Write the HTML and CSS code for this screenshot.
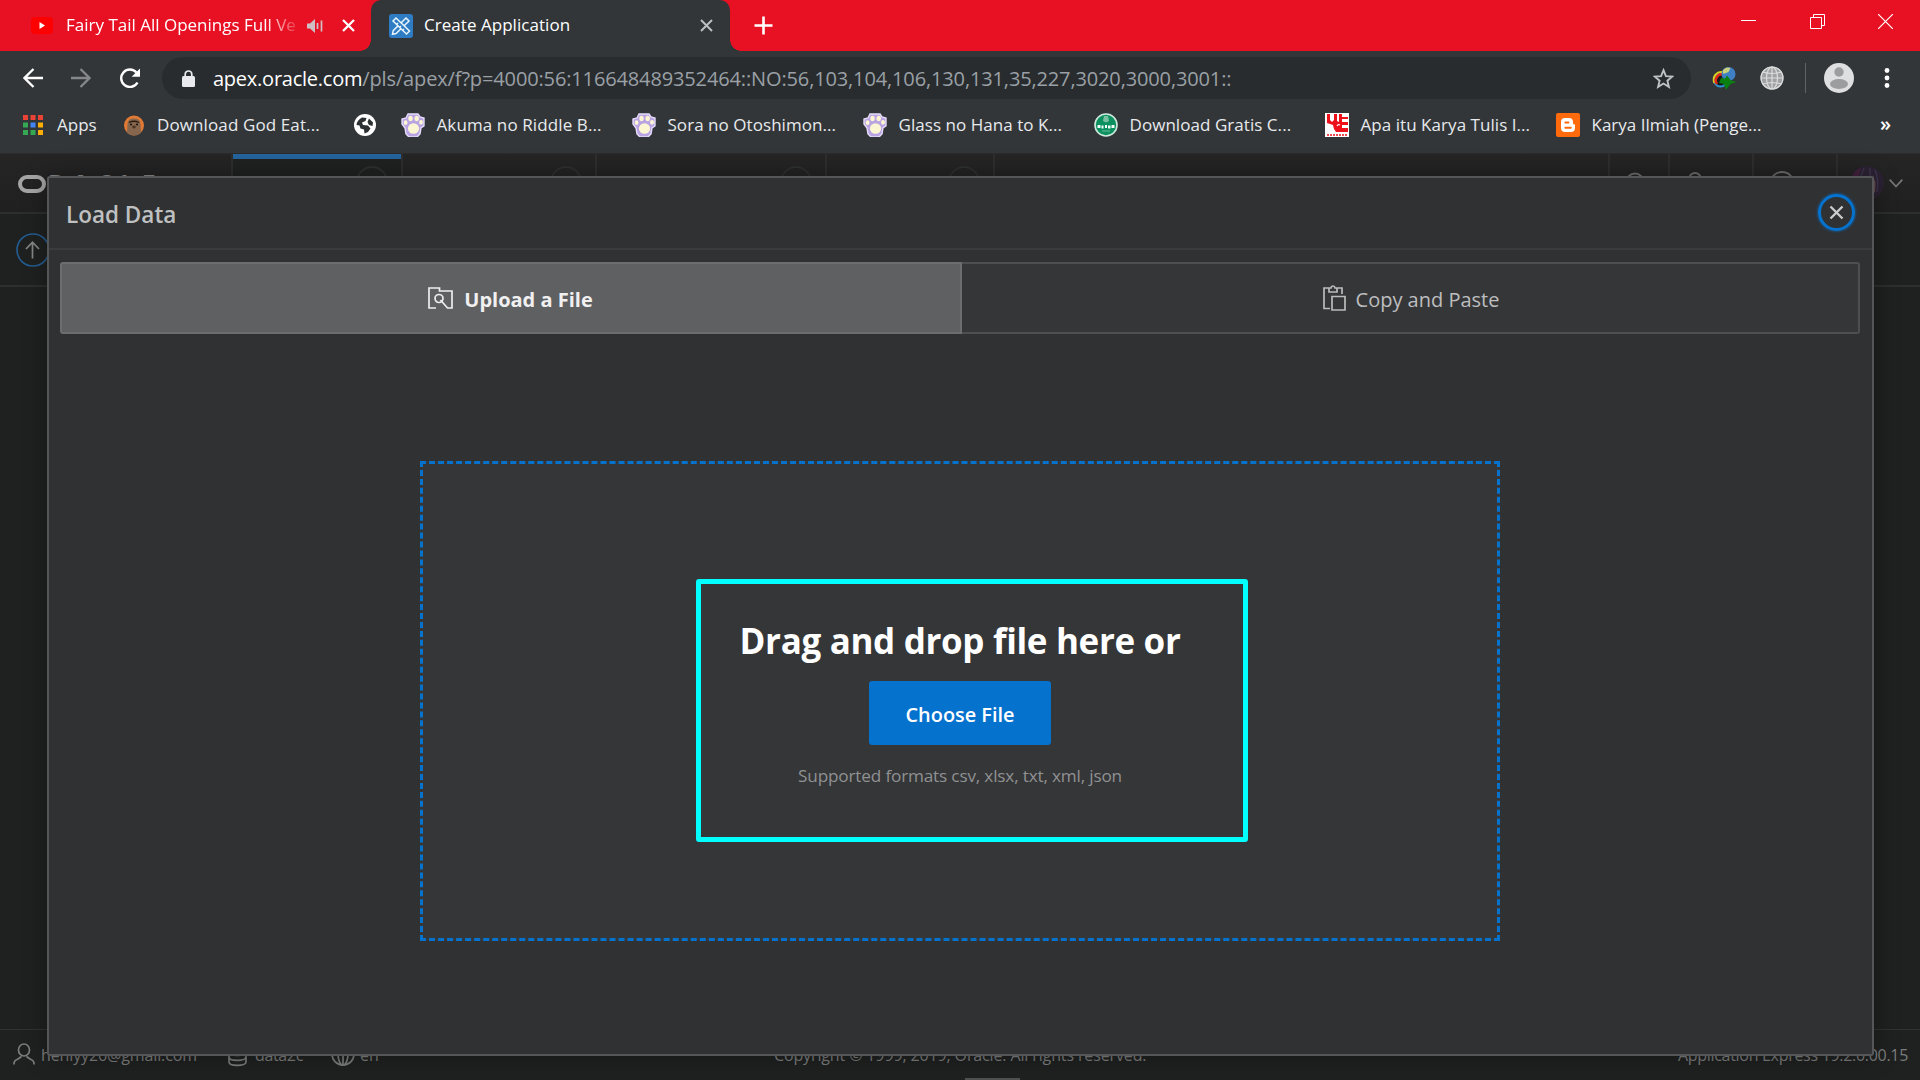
FILE: index.html
```html
<!DOCTYPE html>
<html lang="en">
<head>
<meta charset="utf-8">
<title>Create Application</title>
<link rel="stylesheet" href="styles.css">
</head>
<body>
<svg class="defs" width="0" height="0">
  <symbol id="paw" viewBox="0 0 24 24">
    <path d="M7 1h10l2 3 4 1v8l-3 2-1 6-3 3H8l-3-3-1-6-3-4V6l4-1z" fill="#b9a3e3" stroke="#e6defa" stroke-width="1.4"/>
    <ellipse cx="12.5" cy="15.5" rx="5.6" ry="5.2" fill="#fdf6d3"/>
    <ellipse cx="9.5" cy="5.5" rx="2.2" ry="2.8" fill="#fdf6d3"/>
    <ellipse cx="15.7" cy="5.5" rx="2.2" ry="2.8" fill="#fdf6d3"/>
    <ellipse cx="4.6" cy="9.7" rx="1.9" ry="2.4" fill="#fdf6d3"/>
    <ellipse cx="20" cy="9.3" rx="1.9" ry="2.4" fill="#fdf6d3"/>
  </symbol>
</svg>
<header class="browser">
  <div class="tabstrip">
    <div class="tab tab-idle">
      <svg class="yt" width="22" height="17" viewBox="0 0 22 17"><rect width="22" height="17" rx="4" fill="#f00"/><path d="M8.5 5l5.5 3.5-5.5 3.5z" fill="#fff"/></svg>
      <span class="tab-title fade">Fairy Tail All Openings Full Ve</span>
      <svg class="sound" width="16" height="14" viewBox="0 0 16 14"><path d="M0 4.500h3L8 0v14L3 9.500H0z" fill="#cdbfc4"/><path d="M10.500 4v6M14.500 1.500v11" stroke="#cdbfc4" stroke-width="1.700"/></svg>
      <svg class="tab-x" width="13" height="13" viewBox="0 0 13 13"><path d="M1 1l11 11M12 1L1 12" stroke="#fff" stroke-width="2.300"/></svg>
    </div>
    <div class="tab tab-active">
      <svg width="24" height="24" viewBox="0 0 24 24"><rect width="24" height="24" rx="3" fill="#2d7cc4"/><g fill="none" stroke="#e8f4fd" stroke-width="1.500"><path d="M17 4l3 3L7 19.500l-3.500.8.700-3.600z"/><path d="M4 7l3-3 13.500 13-3 3z" fill="#2d7cc4"/><path d="M9 9l-1.500 1.500M12 12l-1.500 1.500M15 15l-1.500 1.500"/></g></svg>
      <span class="tab-title app-title">Create Application</span>
      <svg class="tab-x2" width="13" height="13" viewBox="0 0 13 13"><path d="M1 1l11 11M12 1L1 12" stroke="#bcbfc1" stroke-width="2"/></svg>
    </div>
    <svg class="plus" width="19" height="19" viewBox="0 0 19 19"><path d="M9.500 0.500v18M.5 9.500h18" stroke="#fff" stroke-width="2.600"/></svg>
    <div class="winctl">
      <svg width="15" height="15" viewBox="0 0 15 15"><path d="M0 6.500h15" stroke="#fff"/></svg>
      <svg width="15" height="15" viewBox="0 0 15 15"><path d="M.5 3.500h11v11H.5zM3.500 3.500v-3h11v11h-3" fill="none" stroke="#fff"/></svg>
      <svg width="15" height="15" viewBox="0 0 15 15"><path d="M0 0l15 15M15 0L0 15" stroke="#fff" stroke-width="1.200"/></svg>
    </div>
  </div>
  <div class="toolbar">
    <svg width="20" height="20" viewBox="0 0 20 20"><path d="M20 10H2M10.500 1L1.500 10l9 9" fill="none" stroke="#fff" stroke-width="2.300"/></svg>
    <svg width="20" height="20" viewBox="0 0 20 20"><path d="M0 10h18M9.500 1l9 9-9 9" fill="none" stroke="#858789" stroke-width="2.300"/></svg>
    <svg width="22" height="20" viewBox="0 0 22 20"><path d="M18.500 14.500A8.700 8.700 0 1 1 17.500 4.500" fill="none" stroke="#fff" stroke-width="2.400"/><path d="M21 .5v8.300h-8.300z" fill="#fff"/></svg>
    <div class="omnibox">
      <svg class="lock" width="13" height="17" viewBox="0 0 13 17"><path d="M3.200 7V4.300a3.300 3.300 0 0 1 6.600 0V7" fill="none" stroke="#e8eaed" stroke-width="1.700"/><rect y="6" width="13" height="11" rx="1.500" fill="#e8eaed"/></svg>
      <span class="url"><span class="host">apex.oracle.com</span><span class="path">/pls/apex/f?p=4000:56:116648489352464::NO:56,103,104,106,130,131,35,227,3020,3000,3001::</span></span>
      <svg class="star" width="21" height="21" viewBox="0 0 21 21"><path d="M10.500 2.200l2.400 5.900 6.300.5-4.800 4.100 1.500 6.200-5.400-3.400-5.400 3.400 1.500-6.200-4.800-4.100 6.300-.5z" fill="none" stroke="#bfc2c4" stroke-width="1.900"/></svg>
    </div>
    <svg class="idm" width="26" height="26" viewBox="0 0 26 26"><circle cx="9.500" cy="15" r="6.500" fill="#16181a" stroke="#2f97d6" stroke-width="2"/><path d="M3.500 18a7.500 7.500 0 0 1 9-10.500" fill="none" stroke="#d9cf20" stroke-width="2"/><path d="M6 19a6 6 0 0 1 6-9.500" fill="none" stroke="#e02818" stroke-width="2.500"/><circle cx="17.500" cy="9" r="7" fill="#3f7fc4"/><path d="M11.500 6q3-5 8-3l-2 4-5 2z" fill="#c9cf7a"/><path d="M10 13l4 .5 2-3 4 5 5.500 1.500-6 2-4.500 6-2-6-5-1z" fill="#0a8010"/></svg>
    <svg class="globe" width="24" height="24" viewBox="0 0 24 24"><circle cx="12" cy="12" r="11.500" fill="#9fa1a3"/><g fill="none" stroke="#dcdddd" stroke-width="1.200"><circle cx="12" cy="12" r="11"/><ellipse cx="12" cy="12" rx="5.500" ry="11"/><path d="M12 1v22M1 12h22M3 6q9 3 18 0M3 18q9-3 18 0"/></g></svg>
    <span class="sep"></span>
    <svg class="profile" width="30" height="30" viewBox="0 0 30 30"><circle cx="15" cy="15" r="15" fill="#dedfe0"/><circle cx="15" cy="9" r="4.700" fill="#9b9d9f"/><ellipse cx="15" cy="21" rx="9" ry="5" fill="#9b9d9f"/></svg>
    <svg class="kebab" width="6" height="20" viewBox="0 0 6 20"><g fill="#fff"><circle cx="3" cy="2.500" r="2.400"/><circle cx="3" cy="10" r="2.400"/><circle cx="3" cy="17.500" r="2.400"/></g></svg>
  </div>
  <nav class="bookmarks">
    <a class="bm bm-apps"><svg width="20" height="20" viewBox="0 0 20 20"><g fill="#ea4335"><path d="M0 0h5v5H0zM7.500 0h5v5h-5zM15 0h5v5h-5z"/></g><path d="M0 7.500h5v5H0zM0 15h5v5H0zM7.500 15h5v5h-5z" fill="#34a853"/><path d="M7.500 7.500h5v5h-5z" fill="#4285f4"/><path d="M15 7.500h5v5h-5zM15 15h5v5h-5z" fill="#fbae05"/></svg><span>Apps</span></a>
    <a class="bm bm-god"><svg width="20" height="21" viewBox="0 0 20 21"><circle cx="10" cy="10.500" r="10" fill="#e27a36"/><path d="M3.500 9q0-5.500 6.500-5.500T16.500 9l.5 9q-7 5-14 0z" fill="#86664c"/><path d="M5 7.500q5-2.500 10 0" fill="none" stroke="#2b1b12" stroke-width="1.300"/><path d="M6 9.500h2M12 9.500h2" stroke="#1a0f0a" stroke-width="1.500"/><ellipse cx="10" cy="12" rx="1.800" ry="1.400" fill="#4b3526"/></svg><span class="wide">Download God Eat...</span></a>
    <a class="bm bm-globe"><svg width="22" height="22" viewBox="0 0 22 22"><circle cx="11" cy="11" r="11" fill="#fff"/><path d="M2.500 11q.5-5 5.500-7.500l4.500.5-1 3-3.500 1.500 1 2.500 5 .5 2.500 3-2.500 3.500-3.500 1.500-.5-4-3.500-1-1-3zM15 4.500l4 4-.5 3.500-3.500-1-1.500-3z" fill="#2c3033"/></svg></a>
    <a class="bm"><svg width="24" height="24"><use href="#paw"/></svg><span class="wide">Akuma no Riddle B...</span></a>
    <a class="bm"><svg width="24" height="24"><use href="#paw"/></svg><span class="semi-wide">Sora no Otoshimon...</span></a>
    <a class="bm"><svg width="24" height="24"><use href="#paw"/></svg><span class="semi-wide">Glass no Hana to K...</span></a>
    <a class="bm"><svg width="24" height="24" viewBox="0 0 24 24"><circle cx="12" cy="12" r="11" fill="#0d9060" stroke="#cfe8dd" stroke-width="1.600"/><path d="M10 3h4l1 5-3 1.500L9 8z" fill="#7cc0a2"/><path d="M3.500 13.500h3M7.500 14h2M11 13.500h2M14 14h2.500M17.500 13.500h3" stroke="#f2fff9" stroke-width="3"/><path d="M8 18h8" stroke="#5fb392" stroke-width="1.200"/></svg><span class="semi-wide">Download Gratis C...</span></a>
    <a class="bm"><svg width="24" height="24" viewBox="0 0 24 24"><rect width="24" height="24" fill="#fff"/><path d="M2 1h3v6l2 2 2-2V1h3v7l2 1V1h3v3h6v2h-6v3h6v3h-6v3h6v4H11l-2-3-1-4-6-2z" fill="#ed0f19"/><path d="M12 13q1-2 3-1" fill="none" stroke="#fff" stroke-width="1.300"/><path d="M2 22h20" stroke="#ed0f19" stroke-width="1.500" stroke-dasharray="2 1"/></svg><span class="semi-wide">Apa itu Karya Tulis I...</span></a>
    <a class="bm"><svg width="24" height="24" viewBox="0 0 24 24"><rect width="24" height="24" rx="2" fill="#ff6a0c"/><path d="M9 5h4a4 4 0 0 1 4 4v1.500q.3 1 2 1V15a4 4 0 0 1-4 4H9a4 4 0 0 1-4-4V9a4 4 0 0 1 4-4z" fill="#fff"/><path d="M9.300 9.500h3.200M9.300 14.700h5.500" stroke="#ff6a0c" stroke-width="1.900" stroke-linecap="round"/></svg><span>Karya Ilmiah (Penge...</span></a>
    <span class="more">»</span>
  </nav>
</header>
<main class="page">
  <div class="appbar">
    <div class="brand"><span class="logo-o"></span><span class="logo-rest">RACLE</span></div>
    <div class="navtab n1"><i></i></div>
    <div class="navtab n2"><i></i></div>
    <div class="navtab n3"><i></i></div>
    <div class="navtab n4"><i></i></div>
    <div class="navfill"></div>
    <div class="tool w1"><svg width="30" height="30" viewBox="0 0 30 30"><circle cx="13" cy="10" r="8.500"/><path d="M19 16l8 8"/></svg></div>
    <div class="tool w2"><svg width="30" height="30" viewBox="0 0 30 30"><circle cx="13" cy="7" r="6"/><path d="M3 25q2-10 10-10t10 10"/></svg></div>
    <div class="tool w2"><svg class="help" width="30" height="30" viewBox="0 0 30 30"><circle cx="16" cy="13" r="12"/></svg></div>
    <div class="user">
      <svg width="34" height="34" viewBox="0 0 34 34"><circle cx="17" cy="17" r="17" fill="#2b2233"/><path d="M1 12Q5 3 11 2L6 20z" fill="#43203c"/><path d="M14 2q-4 9-5 18M20 2q0 11 2 18M25 4q4 10 2 22" fill="none" stroke="#3d334a" stroke-width="1.500"/><path d="M23 9l2.500 8-.5 10-2.500-3z" fill="#6b4c4f"/></svg>
      <svg width="14" height="9" viewBox="0 0 14 9"><path d="M.7.7L7 7.500 13.300.7" fill="none" stroke="#777" stroke-width="1.700"/></svg>
    </div>
  </div>
  <div class="crumbs"><svg width="34" height="34" viewBox="0 0 34 34"><circle cx="17" cy="17" r="16" fill="none" stroke="#245d93" stroke-width="1.600"/><path d="M16.500 25.500V9.500M10 16l6.500-6.800L23 16" fill="none" stroke="#858686" stroke-width="1.700"/></svg></div>
  <div class="canvas"></div>
  <footer class="foot">
    <div class="foot-left">
      <svg width="22" height="22" viewBox="0 0 22 22"><ellipse cx="11" cy="7" rx="5.500" ry="6"/><path d="M1 21.500q-.5-4 4-5.500l3.500-2.500M21 21.500q.5-4-4-5.500l-3.500-2.500"/></svg>
      <span class="mail">henlyy26@gmail.com</span>
      <svg width="19" height="24" viewBox="0 0 19 24"><ellipse cx="9.500" cy="4" rx="8.500" ry="3"/><path d="M1 4v15c0 4.500 17 4.500 17 0V4M1 9c0 4.500 17 4.500 17 0M1 14c0 4.500 17 4.500 17 0"/></svg>
      <span class="ws">data2c</span>
      <svg width="24" height="24" viewBox="0 0 24 24"><circle cx="12" cy="11" r="11"/><ellipse cx="12" cy="11" rx="5" ry="11"/><path d="M12 0v22M1 11h22"/></svg>
      <span class="en">en</span>
    </div>
    <span class="copy">Copyright © 1999, 2019, Oracle. All rights reserved.</span>
    <span class="ver">Application Express 19.2.0.00.15</span>
  </footer>
  <span class="grip"></span>
</main>
<section class="dialog">
  <div class="dialog-head">
    <h1>Load Data</h1>
    <button class="close"><svg width="15" height="15" viewBox="0 0 15 15"><path d="M1.500 1.500l12 12M13.500 1.500l-12 12" stroke="#ccc" stroke-width="2.300"/></svg></button>
  </div>
  <div class="dialog-body">
    <div class="modes">
      <div class="mode mode-on">
        <svg width="25" height="22" viewBox="0 0 25 22"><path d="M8 21H1V1h10.500v3H24v17h-4.500L12.500 13" fill="none" stroke="#eee" stroke-width="1.700"/><circle cx="11" cy="11.500" r="4" fill="none" stroke="#eee" stroke-width="1.700"/></svg>
        <span>Upload a File</span>
      </div>
      <div class="mode mode-off">
        <svg width="23" height="26" viewBox="0 0 23 26"><path d="M6 3H1v20.500h6M14 3h5v6M6 3h2q.3-2 2-2t2 2h2v4H6zM9 11.500h13V25H9z" fill="none" stroke="#bbb" stroke-width="1.700"/></svg>
        <span>Copy and Paste</span>
      </div>
    </div>
    <div class="dropzone">
      <h2>Drag and drop file here or</h2>
      <button class="choose">Choose File</button>
      <p>Supported formats csv, xlsx, txt, xml, json</p>
      <div class="marker"></div>
    </div>
  </div>
</section>
</body>
</html>
```
FILE: styles.css
```css
* { box-sizing: border-box; }
body {
  margin: 0;
  width: 1920px;
  height: 1080px;
  overflow: hidden;
  background: #1f2120;
  font-family: "Open Sans", "Noto Sans", sans-serif;
  font-size: 17px;
  color: #fff;
  display: flex;
  flex-direction: column;
  position: relative;
}
svg { display: block; flex: none; }
span, h1, h2, p { white-space: nowrap; }
.defs { position: absolute; }

/* browser chrome */
.browser { height: 153px; background: #323639; flex: none; }
.tabstrip { height: 51px; display: flex; align-items: center; background: #e81123; }
.tab { height: 51px; display: flex; align-items: center; flex: none; }
.tab-title { padding-bottom: 2px; }
.app-title { letter-spacing: .04px; }
.tab-idle { width: 371px; padding-left: 31px; }
.yt { margin-right: 13px; }
.fade { width: 230px; -webkit-mask-image: linear-gradient(90deg, #000 200px, transparent 236px); mask-image: linear-gradient(90deg, #000 200px, transparent 236px); }
.sound { margin-left: 11px; }
.tab-x { margin-left: 19px; }
.tab-active { width: 359px; padding: 0 17px 0 18px; background: #323639; border-radius: 10px 10px 0 0; position: relative; gap: 11px; }
.tab-active::before, .tab-active::after { content: ""; position: absolute; bottom: 0; width: 11px; height: 11px; }
.tab-active::before { left: -11px; background: radial-gradient(circle at 0 0, transparent 10.5px, #323639 11px); }
.tab-active::after { right: -11px; background: radial-gradient(circle at 100% 0, transparent 10.5px, #323639 11px); }
.tab-x2 { margin-left: auto; }
.plus { margin-left: 24px; }
.winctl { margin: -8px 27px 0 auto; display: flex; gap: 53.5px; }
.toolbar { height: 54px; display: flex; align-items: center; padding-left: 23px; gap: 28px; }
.omnibox { width: 1529px; height: 42px; border-radius: 21px; background: #282c2e; display: flex; align-items: center; padding: 0 17px 0 20px; margin-left: -7px; flex: none; }
.url { font-size: 20px; margin-left: 18px; display: flex; }
.host { letter-spacing: -.24px; }
.path { color: #9aa0a6; letter-spacing: -.135px; }
.star { margin-left: auto; }
.idm { margin-left: -8px; }
.globe { margin-left: -5px; }
.sep { width: 1px; height: 30px; background: #5f6366; margin: 0 -10px 0 -7px; }
.profile { margin-right: 2px; }
.bookmarks { height: 40px; display: flex; align-items: center; padding-left: 23px; }
.bm { display: flex; align-items: center; width: 231px; gap: 11.5px; flex: none; color: #e8eaed; }
.bm span { padding-bottom: 1px; margin-top: -1px; }
.bm-apps { width: 101px; gap: 14px; }
.bm-god { width: 230px; gap: 13px; }
.bm-globe { width: 47px; }
.bm .wide { letter-spacing: .11px; }
.bm .semi-wide { letter-spacing: .05px; }
.more { margin: -3px 0 0 93px; font-size: 20px; font-weight: 600; line-height: 20px; }

/* dimmed page under the dialog */
.page { flex: 1; display: flex; flex-direction: column; border-top: 1px solid #2c2c2d; }
.appbar { height: 60px; display: flex; background: linear-gradient(#252525, #202020); border-bottom: 2px solid #2d2e2e; flex: none; }
.brand { width: 231px; padding: 21px 0 0 18px; display: flex; flex: none; }
.logo-o { width: 28px; height: 18px; border: 4px solid #a5a5a5; border-radius: 9px; flex: none; }
.logo-rest { font-size: 25px; line-height: 17px; font-weight: 700; letter-spacing: 7.5px; color: #8a8a8a; margin-left: 2px; }
.navtab { border-left: 2px solid #2e2e2e; position: relative; flex: none; padding: 12px 13px 0 0; }
.navtab i { display: block; width: 32px; height: 32px; border: 2px solid #2e2f2f; border-radius: 50%; margin-left: auto; }
.n1 { width: 170px; background: #1f2221; }
.n1::before { content: ""; position: absolute; left: 0; top: 0; width: 168px; height: 5px; background: #24649c; }
.n2 { width: 194px; }
.n3 { width: 230px; }
.n4 { width: 168px; }
.navfill { flex: 1; border-left: 2px solid #2e2e2e; }
.tool { border-left: 2px solid #2e2e2e; padding: 18px 0 0 12px; }
.tool svg { fill: none; stroke: #6d6d6d; stroke-width: 1.8; overflow: hidden; }
.w1 { width: 60px; }
.w2 { width: 84px; }
.help { margin-top: -1px; }
.user { width: 84px; border-left: 2px solid #2e2e2e; padding-left: 12px; display: flex; align-items: center; gap: 5px; }
.crumbs { height: 73px; border-bottom: 2px solid #2d2e2e; padding: 19px 16px; flex: none; }
.canvas { flex: 1; }
.foot { height: 51px; border-top: 1px solid #313232; display: grid; grid-template-columns: 774px 1fr auto; padding: 13px 12px 0 0; color: #7b7c7c; font-size: 16px; line-height: 24px; }
.foot-left { display: flex; padding-left: 13px; align-items: flex-start; }
.foot svg { fill: none; stroke: #7b7c7c; stroke-width: 1.7; }
.mail { width: 187px; margin-left: 6px; letter-spacing: -.12px; }
.ws { width: 76px; margin-left: 8px; letter-spacing: -.35px; }
.en { margin-left: 5px; }
.copy { letter-spacing: -.13px; }
.ver { letter-spacing: -.3px; }
.grip { position: absolute; left: 965px; top: 1078px; width: 55px; height: 2px; background: #505151; }

/* dialog */
.dialog { position: absolute; left: 47px; top: 176px; width: 1827px; height: 880px; border: 2px solid #555657; border-radius: 3px; background: #303133; box-shadow: 0 0 24px rgba(0, 0, 0, .35); }
.dialog-head { height: 72px; display: flex; justify-content: space-between; align-items: center; padding: 0 17px; border-bottom: 2px solid #3a3b3d; }
h1 { margin: 2px 0 0; font-size: 22.5px; font-weight: 600; color: #bfc0c1; }
.close { width: 37px; height: 37px; margin-top: -1px; border: 3px solid #0572ce; border-radius: 50%; background: none; padding: 0; display: grid; place-items: center; box-shadow: 0 0 3px #0572ce; }
.dialog-body { width: 1822px; padding: 12px 11px; }
.modes { display: flex; height: 72px; }
.mode { flex: 1; border: 2px solid #4e4f51; border-left: 0; border-radius: 0 3px 3px 0; background: #353638; display: flex; align-items: center; justify-content: center; gap: 11px; font-size: 20px; color: #bdbebf; }
.mode span { padding-top: 2px; }
.mode-on { flex: none; width: 902px; border: 2px solid #6c6d6f; border-radius: 3px 0 0 3px; background: #5f6062; color: #f0f0f0; font-weight: 700; padding-right: 1px; }
.mode-off { gap: 10px; padding-left: 2px; }
.mode-off svg { margin-top: -1px; }
.dropzone { position: relative; width: 1080px; height: 480px; margin: 127px auto 0; border: 3px dashed #0572ce; background: #353638; display: flex; flex-direction: column; align-items: center; padding-top: 147px; }
h2 { margin: 0; font-size: 35px; line-height: 60px; font-weight: 700; letter-spacing: -.34px; }
.choose { width: 182px; height: 64px; margin-top: 10px; border: 0; border-radius: 3px; background: #0572ce; color: #fff; padding: 2px 0 0; font: 600 19.9px "Open Sans", sans-serif; }
p { margin: 17px 0 0; font-size: 17.2px; line-height: 28px; letter-spacing: -.18px; color: #909192; }
.marker { position: absolute; left: 273px; top: 115px; width: 552px; height: 263px; border: 5px solid #0ff; border-radius: 3px; }
```
